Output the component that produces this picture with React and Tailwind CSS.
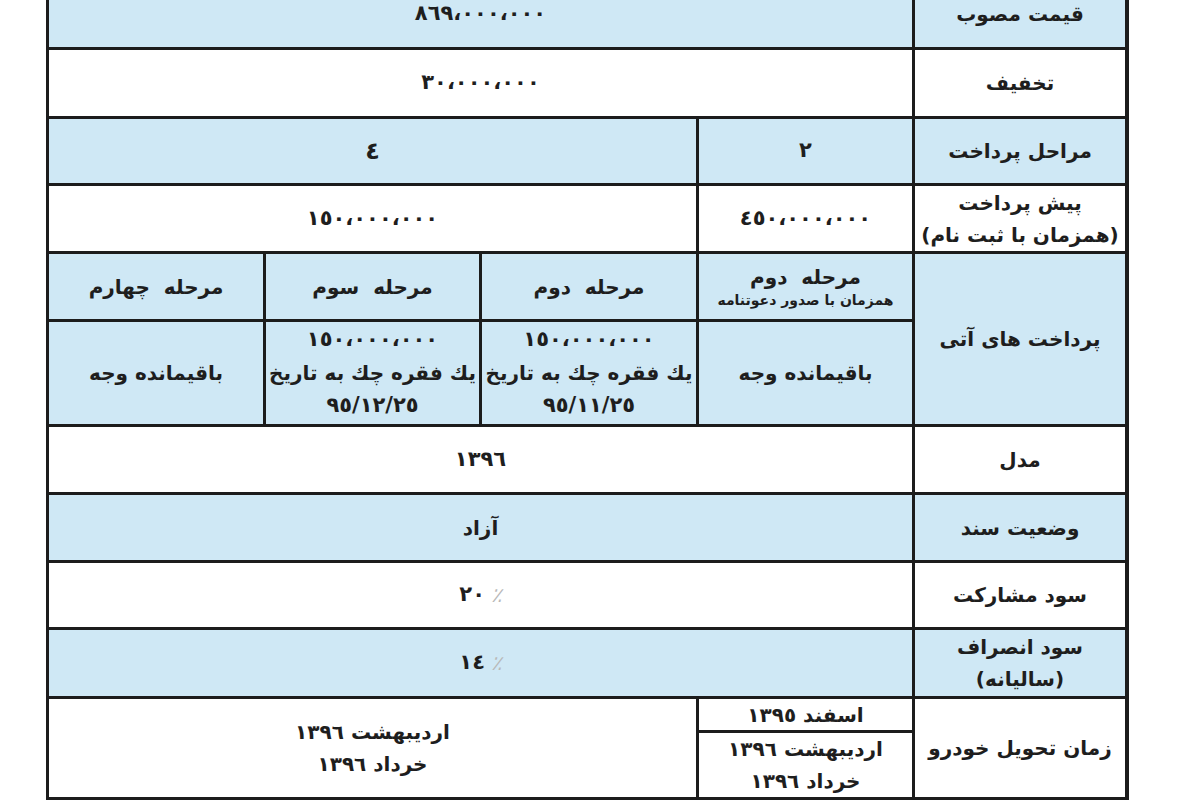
import React from 'react';

const blue = 'bg-[#cfe8f5]';
const white = 'bg-white';

function Cell({ className = '', children }) {
  return (
    <div className={`flex flex-col items-center justify-center text-center leading-[1.6] ${className}`}>
      {children}
    </div>
  );
}

function Num({ children }) {
  return <span className="tracking-[2px] text-[21px]">{children}</span>;
}

function Pct({ n }) {
  return (
    <span dir="ltr" className="inline-flex items-center gap-[6px]">
      <Num>{n}</Num>
      <span className="text-[#b8b8b8] font-normal italic">٪</span>
    </span>
  );
}

export default function App() {
  return (
    <div className="w-[1200px] h-[800px] overflow-hidden bg-white">
      <div
        dir="rtl"
        className="ml-[46px] mt-[-22px] w-[1083px] bg-[#1c1c1c] border-x-[4px] border-y-[3px] border-[#1c1c1c] text-[20px] font-bold text-[#1e1e1e]"
        style={{ fontFamily: '"DejaVu Sans", "Noto Sans", sans-serif' }}
      >
        <div className="grid grid-cols-[210px_213px_214px_213px_214px] grid-rows-[66px_66px_64px_65px_65px_102px_65px_65px_64px_66px_31px_64px] gap-[3px]">
          {/* قیمت مصوب */}
          <Cell className={blue}>قیمت مصوب</Cell>
          <Cell className={`${blue} col-span-4`}><Num>٨٦٩،٠٠٠،٠٠٠</Num></Cell>

          {/* تخفیف */}
          <Cell className={white}>تخفیف</Cell>
          <Cell className={`${white} col-span-4`}><Num>٣٠،٠٠٠،٠٠٠</Num></Cell>

          {/* مراحل پرداخت */}
          <Cell className={blue}>مراحل پرداخت</Cell>
          <Cell className={blue}><Num>٢</Num></Cell>
          <Cell className={`${blue} col-span-3`}><span className="text-[24px]">٤</span></Cell>

          {/* پیش پرداخت */}
          <Cell className={white}>
            <span>پیش پرداخت</span>
            <span>(همزمان با ثبت نام)</span>
          </Cell>
          <Cell className={white}><Num>٤٥٠،٠٠٠،٠٠٠</Num></Cell>
          <Cell className={`${white} col-span-3`}><Num>١٥٠،٠٠٠،٠٠٠</Num></Cell>

          {/* پرداخت های آتی */}
          <Cell className={`${blue} row-span-2`}>پرداخت های آتی</Cell>
          <Cell className={blue}>
            <span className="leading-[1.4]">مرحله&nbsp; دوم</span>
            <span className="text-[14px] leading-[1.3]">همزمان با صدور دعوتنامه</span>
          </Cell>
          <Cell className={blue}>مرحله&nbsp; دوم</Cell>
          <Cell className={blue}>مرحله&nbsp; سوم</Cell>
          <Cell className={blue}>مرحله&nbsp; چهارم</Cell>

          <Cell className={blue}>باقیمانده وجه</Cell>
          <Cell className={blue}>
            <Num>١٥٠،٠٠٠،٠٠٠</Num>
            <span>یك فقره چك به تاریخ</span>
            <Num>٩٥/١١/٢٥</Num>
          </Cell>
          <Cell className={blue}>
            <Num>١٥٠،٠٠٠،٠٠٠</Num>
            <span>یك فقره چك به تاریخ</span>
            <Num>٩٥/١٢/٢٥</Num>
          </Cell>
          <Cell className={blue}>باقیمانده وجه</Cell>

          {/* مدل */}
          <Cell className={white}>مدل</Cell>
          <Cell className={`${white} col-span-4`}><Num>١٣٩٦</Num></Cell>

          {/* وضعیت سند */}
          <Cell className={blue}>وضعیت سند</Cell>
          <Cell className={`${blue} col-span-4`}>آزاد</Cell>

          {/* سود مشارکت */}
          <Cell className={white}>سود مشارکت</Cell>
          <Cell className={`${white} col-span-4`}><Pct n="٢٠" /></Cell>

          {/* سود انصراف */}
          <Cell className={blue}>
            <span>سود انصراف</span>
            <span>(سالیانه)</span>
          </Cell>
          <Cell className={`${blue} col-span-4`}><Pct n="١٤" /></Cell>

          {/* زمان تحویل خودرو */}
          <Cell className={`${white} row-span-2`}>زمان تحویل خودرو</Cell>
          <Cell className={`${white} leading-none`}>اسفند ١٣٩٥</Cell>
          <Cell className={`${white} col-span-3 row-span-2`}>
            <span>اردیبهشت ١٣٩٦</span>
            <span>خرداد ١٣٩٦</span>
          </Cell>
          <Cell className={white}>
            <span>اردیبهشت ١٣٩٦</span>
            <span>خرداد ١٣٩٦</span>
          </Cell>
        </div>
      </div>
    </div>
  );
}
